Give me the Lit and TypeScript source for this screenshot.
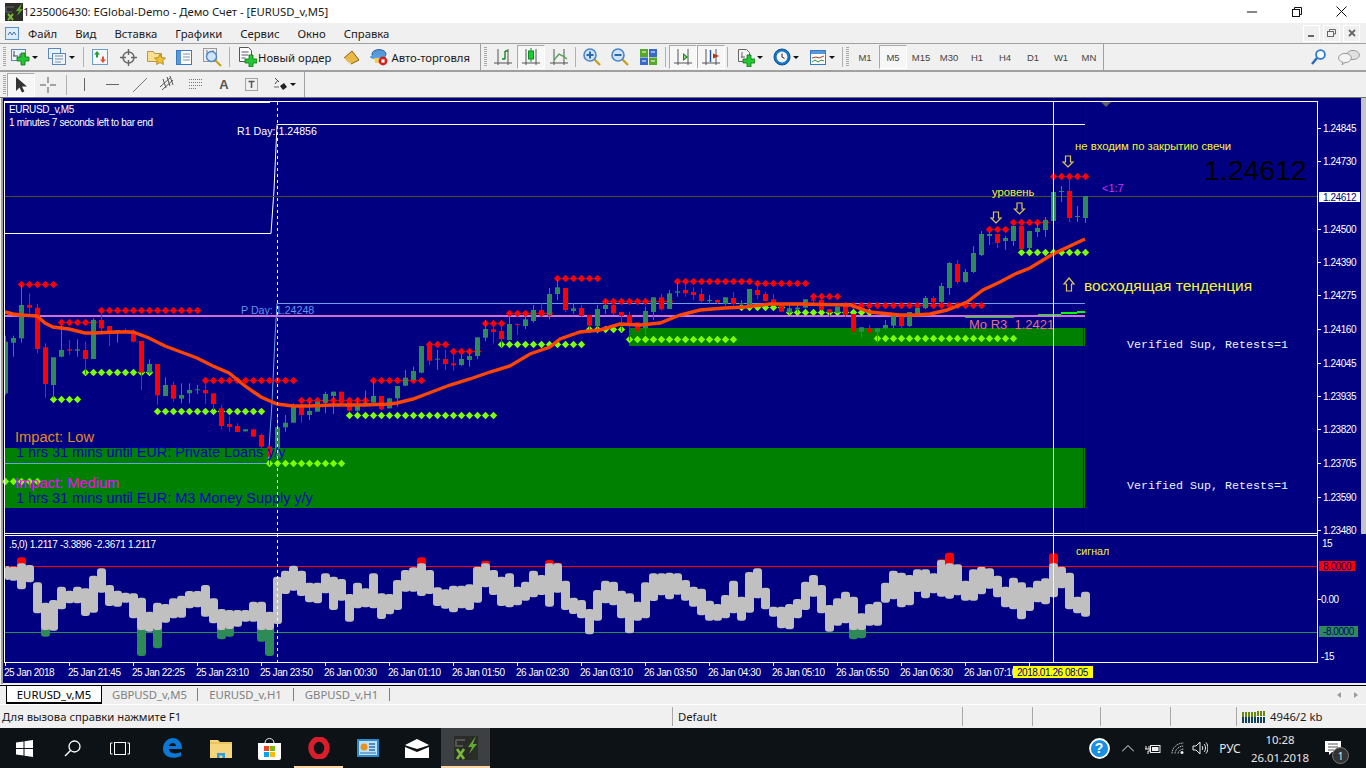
import { LitElement, html, svg, css } from 'lit'
import { customElement } from 'lit/decorators.js'

const CX = (k: number) => 5 + 8 * k

// rows are [green?, bodyTop, bodyBottom, wickTop, wickBottom], read off 3x crops
type Row = number[]
const fromCrop = (base: number, scale: number, rows: Row[]) =>
  rows.map((r) => [r[0], ...r.slice(1).map((v) => base + v / scale)])

const CANDLES = [
  ...fromCrop(270, 3, [
    [1,215,370,197,375],[1,204,218,197,260],[1,105,205,45,218],[0,105,113,70,130],[0,113,237,102,250],
    [0,232,342,220,383],[1,262,345,262,385],[1,240,260,165,262],[0,238,242,210,255],[1,238,242,208,260],
    [0,240,267,215,313],[1,150,267,145,267],[0,150,175,120,185],[0,168,188,168,228],[1,180,190,180,218],
    [0,180,188,175,190],[0,187,215,178,218],[0,213,308,213,360],[1,282,308,268,312],[0,282,376,282,405],
    [1,345,378,322,378],[0,345,386,335,395],[1,375,386,340,400],[1,360,370,340,400],[1,358,361,345,372],
    [0,360,370,335,402],[0,370,402,370,420],[0,415,468,405,478],[0,462,471,440,485],[0,468,486,460,486],
    [1,478,484,478,484],[0,478,500,478,500],[0,495,530,490,535],[0,530,560,530,585],[1,472,560,435,560],
    [1,458,472,435,485],[1,410,458,400,458],[0,410,435,385,458],[1,423,435,395,450],[1,395,425,395,425],
    [1,372,398,365,430],[1,365,378,365,432],[0,365,398,365,400],[0,385,422,380,425],[1,403,422,385,425],
    [1,398,405,362,405],[1,378,398,332,398],[0,378,418,378,420],[1,385,415,385,415],[1,348,385,348,410],
    [1,323,347,300,347],[1,303,330,290,335],[1,228,308,228,310],[0,228,272,215,285],[1,266,269,240,300],
    [0,267,282,240,300],
  ]),
  ...fromCrop(260, 3, [
    [0,310,316,285,332],[1,297,315,285,318],[1,288,300,270,320],[1,232,288,232,297],[1,207,233,180,243],
    [0,208,216,180,250],[0,213,237,180,262],[1,192,240,165,240],[0,192,195,190,225],[1,178,198,165,207],
    [1,150,183,135,188],[0,150,165,130,170],[1,102,165,84,178],[1,82,102,58,120],[0,84,150,84,157],
    [1,145,153,130,162],[0,144,168,135,170],[0,165,197,165,218],[1,147,198,135,215],[1,135,147,120,162],
    [0,135,160,125,165],[0,156,168,156,215],[0,165,190,155,242],[0,187,213,187,215],[1,153,205,140,225],
    [1,112,156,112,180],[0,112,148,102,152],[1,100,147,90,147],[1,94,98,68,110],[0,90,100,75,110],
    [0,96,105,82,120],[0,102,123,85,128],[1,120,122,105,132],[0,120,128,118,132],[1,112,132,112,136],
    [0,114,132,96,136],[1,129,132,120,145],[1,87,135,87,135],[0,90,105,68,118],[0,102,123,96,125],
    [0,118,132,102,138],[0,132,155,132,157],[1,145,158,130,165],[1,143,148,130,158],[1,118,143,118,145],
    [0,118,122,100,136],[0,120,150,120,152],[0,148,158,148,170],[1,140,158,140,160],[0,140,165,128,172],
    [0,162,215,162,217],[1,202,215,202,233],[0,205,218,195,218],[1,205,216,205,250],[1,195,205,180,208],
    [1,168,197,168,204],
  ]),
  ...fromCrop(0, 1, [
    [0,315,326,314,328],[1,312,326,312,327],[1,308,314,308,315],[1,298,308,296,309],[0,298,302,296,304],
    [1,286,302,283,303],[1,263,288,262,295],[0,264,282,260,284],[1,272,282,269,283],[1,253,272,246,273],
    [1,234,255,231,256],[1,234,236,232,245],[0,234,243,234,248],[1,238,241,236,250],[1,226,241,226,246],
    [0,226,249,220,250],[1,231,248,231,249],[1,228,232,223,237],[1,220,230,217,237],[1,192,221,177,221],
    [1,191,192,186,202],[0,191,218,177,222],[1,216,217,206,222],[1,196,218,196,223],
  ]),
]

// [first k, last k, y]
const RED_ROWS = [
  [2,6,284],[12,24,310],[7,11,322],[25,36,380],[37,45,400],[46,52,380],[53,55,344],[56,59,351],[60,62,323],
  [63,68,313],[69,74,278],[75,83,301],[84,93,281],[94,100,283],[101,104,296],[105,122,305],[123,125,229],
  [126,130,222],[131,135,176],
]
const GREEN_ROWS = [
  [0,4,481],[6,9,399],[10,18,372],[19,32,411],[33,42,463],[43,61,415],[62,72,344],[73,77,329],[78,91,339],
  [92,97,307],[98,108,312],[109,126,338],[127,135,252],
]

const MA = [
  [5,312],[13,314],[21,315],[37,316],[45,323],[53,327],[61,328],[69,329],[85,333],[93,333],[117,332],[133,332],
  [149,338],[165,346],[181,352],[197,358],[213,366],[229,373],[245,386],[261,397],[277,404],[293,406],[309,406],
  [333,405],[365,405],[389,404],[397,403],[413,399],[429,393],[450,385],[470,379],[490,372],[510,366],[530,354],
  [550,347],[560,339],[580,332],[600,330],[620,324],[640,325],[660,323],[680,315],[700,310],[725,308],[745,307],
  [770,304],[800,304],[850,305],[870,312],[900,315],[915,315],[930,314],[947,310],[967,302],[983,290],[1000,282],
  [1015,274],[1030,268],[1053,254],[1085,239],
]

// sub window bars, [top, bottom] in 3x crop rows from y=530
const OSC = [
  [108,150],[110,152],[100,178],[105,157],[157,250],[218,300],[210,302],[170,238],[182,220],[170,220],[175,258],[137,248],
  [115,188],[165,228],[182,230],[188,218],[190,265],[203,300],[245,305],[218,300],[222,278],[205,265],[197,263],[183,235],
  [183,232],[165,260],[205,280],[237,300],[240,297],[240,290],[240,275],[215,275],[215,300],[245,300],[140,282],[122,192],
  [107,182],[122,198],[158,217],[158,220],[130,190],[140,240],[147,212],[192,275],[158,235],[175,232],[130,235],[190,267],
  [192,253],[150,240],[120,185],[112,185],[100,198],[120,192],[172,228],[178,236],[167,247],[167,235],[163,240],[110,218],
  [100,172],[120,195],[140,228],[130,232],[170,226],[155,212],[122,202],[135,195],[100,230],[100,188],[152,240],[203,252],
  [210,265],[237,313],[180,272],[152,220],[155,226],[182,265],[190,310],[215,272],[157,265],[130,213],[130,196],[128,208],
  [130,194],[150,212],[170,230],[176,256],[212,272],[222,272],[195,265],[152,250],[200,272],[126,248],[115,205],[173,238],
  [230,260],[230,295],[222,298],[207,265],[155,240],[135,200],[165,250],[225,305],[205,287],[185,280],[200,300],[250,300],
  [222,287],[215,287],[158,218],[122,208],[128,232],[135,226],[118,186],[118,205],[130,190],[90,200],[100,206],[103,196],
  [152,212],[118,212],[110,193],[115,176],[137,202],[170,232],[143,238],[157,268],[172,243],[152,217],[145,223],[100,202],
  [110,175],[128,238],[200,250],[185,260],
]
const OSC_RED: Record<number, number> = { 2: 82, 52: 82, 60: 92, 68: 90, 69: 98, 117: 88, 118: 68, 131: 70 }
const OSC_GREEN: Record<number, number> = { 5: 320, 17: 378, 19: 355, 27: 328, 28: 320, 32: 335, 33: 378, 106: 328, 107: 325 }

const PRICES = [
  ['1.24845',128],['1.24730',161],['1.24500',229],['1.24390',262],['1.24275',295],['1.24160',329],['1.24045',363],
  ['1.23935',396],['1.23820',429],['1.23705',463],['1.23590',497],['1.23480',530],
] as [string, number][]

const TIMES = [
  '25 Jan 2018','25 Jan 21:45','25 Jan 22:25','25 Jan 23:10','25 Jan 23:50','26 Jan 00:30','26 Jan 01:10','26 Jan 01:50',
  '26 Jan 02:30','26 Jan 03:10','26 Jan 03:50','26 Jan 04:30','26 Jan 05:10','26 Jan 05:50','26 Jan 06:30','26 Jan 07:10',
]

const diamond = (x: number, y: number, fill: string) =>
  svg`<polygon points="${x - 3.7},${y} ${x},${y - 3.7} ${x + 3.7},${y} ${x},${y + 3.7}" fill=${fill} />`

const hollowArrow = (cx: number, top: number, up = false) => {
  const h = up ? 13 : 11
  const p = up
    ? `${cx},${top} ${cx + 5},${top + 6} ${cx + 2.5},${top + 6} ${cx + 2.5},${top + h} ${cx - 2.5},${top + h} ${cx - 2.5},${top + 6} ${cx - 5},${top + 6}`
    : `${cx - 2.5},${top} ${cx + 2.5},${top} ${cx + 2.5},${top + 6} ${cx + 5},${top + 6} ${cx},${top + h} ${cx - 5},${top + 6} ${cx - 2.5},${top + 6}`
  return svg`<polygon points=${p} fill="none" stroke="#e0c850" stroke-width="1.2" />`
}

@customElement('mt-chart')
export class MtChart extends LitElement {
  static override styles = css`
    :host { display: block; width: 1366px; height: 586px; flex: none; }
    svg { display: block; }
    text { font-family: "Liberation Sans", Arial, sans-serif; }
    .ax { font-size: 10px; letter-spacing: -0.44px; fill: #fff; }
    .ax.dark { fill: #000080; }
    .lbl { font-size: 10px; letter-spacing: -0.34px; fill: #fff; }
    .level { font-size: 10.67px; fill: #fff; }
    .level.blue { fill: #6495ed; }
    .mo { font-size: 13px; fill: #e0708c; }
    .ylw { font-size: 11.3px; fill: #f4f430; }
    .ylw.small { font-size: 10.67px; }
    .ylw.big { font-size: 15.5px; }
    .ratio { font-size: 11px; fill: #c832ff; }
    .bid { font-size: 28.4px; fill: #000; }
    .news { font-size: 14.4px; fill: #0000c8; }
    .news.low { font-size: 14.67px; fill: #e08a28; }
    .news.mid { font-size: 14.67px; fill: #ff00ff; }
    .zone { font-family: "Liberation Mono", monospace; font-size: 11.67px; fill: #f0f4ff; }
    .ma { shape-rendering: geometricPrecision; }
  `

  private candles() {
    return CANDLES.map((c, k) => {
      const x = CX(k)
      const fill = c[0] ? '#2e8b57' : '#ff0000'
      const left = Math.max(5, x - 2)
      return svg`<rect x=${x} y=${c[3]} width="1" height=${c[4] - c[3]} fill=${fill} />
        <rect x=${left} y=${c[1]} width=${x + 3 - left} height=${Math.max(1, c[2] - c[1])} fill=${fill} />`
    })
  }

  private diamonds() {
    const rows = (list: number[][], fill: string) =>
      list.flatMap(([a, b, y]) => {
        const out = []
        for (let k = a; k <= b; k++) out.push(diamond(CX(k) + 0.5, y + 0.5, fill))
        return out
      })
    return [rows(GREEN_ROWS, '#7cff00'), rows(RED_ROWS, '#ff0000')]
  }

  private oscillator() {
    const y = (v: number) => 530 + v / 3
    // bars are one pixel wider than the spacing so neighbours merge
    const bar = (k: number, a: number, b: number, fill: string) => {
      const left = Math.max(5, CX(k) - 4)
      return svg`<rect x=${left} y=${y(a)} width=${CX(k) + 5 - left} height=${(b - a) / 3} rx="3" fill=${fill} />`
    }
    return OSC.map(([t, b], k) => svg`
      ${OSC_RED[k] ? bar(k, OSC_RED[k], t + 12, '#ff0000') : ''}
      ${OSC_GREEN[k] ? bar(k, b - 12, OSC_GREEN[k], '#2e8b57') : ''}
      ${bar(k, t, b, '#c0c0c0')}`)
  }

  override render() {
    const ma = MA.map((p) => p.join(',')).join(' ')
    return html`<svg width="1366" height="586" viewBox="0 98 1366 586">
      <rect x="0" y="98" width="1366" height="586" fill="#f0f0f0" />
      <rect x="1" y="98" width="2" height="586" fill="#a0a0a0" />
      <rect x="3" y="98" width="1363" height="585" fill="#000080" />
      <rect x="1361" y="98" width="5" height="436" fill="#c4c4c4" />

      <rect x="5" y="448" width="1080" height="60" fill="#008000" />
      <rect x="629" y="328" width="456" height="18" fill="#008000" />
      <rect x="1083" y="102" width="1" height="431" fill="#000" />

      <polyline points="4,233.5 271,233.5 274,190 277,125 277,124.5 1085,124.5" fill="none" stroke="#fff" />
      <polyline points="5,463.5 268,463.5 272,403 275,337 277,303.5 1085,303.5" fill="none" stroke="#6f9fe8" />
      <rect x="4" y="196" width="1313" height="1" fill="#4d4d28" />
      <rect x="5" y="315" width="1080" height="2" fill="#d070d0" />
      <rect x="965" y="317" width="49" height="1" fill="#00e000" />
      <rect x="1038" y="314" width="23" height="1" fill="#00ff00" />
      <rect x="1061" y="312" width="16" height="2" fill="#00ff00" />
      <rect x="1077" y="311" width="8" height="2" fill="#00ff00" />

      ${this.diamonds()}
      ${this.candles()}
      <polyline class="ma" points=${ma} fill="none" stroke="#ff4500" stroke-width="3.4" />

      <text class="level" x="237" y="135">R1 Day: 1.24856</text>
      <text class="level blue" x="241" y="314">P Day: 1.24248</text>
      <text class="mo" x="969" y="329">Mo R3&nbsp;&nbsp;1.2421</text>
      <text class="news low" x="15" y="442">Impact: Low</text>
      <text class="news" x="16" y="457">1 hrs 31 mins until EUR: Private Loans y/y</text>
      <text class="news mid" x="15" y="488">Impact: Medium</text>
      <text class="news" x="16" y="503">1 hrs 31 mins until EUR: M3 Money Supply y/y</text>
      <text class="lbl" x="9" y="113">EURUSD_v,M5</text>
      <text class="lbl" x="9" y="126">1 minutes 7 seconds left to bar end</text>
      <text class="ylw" x="1075" y="150">не входим по закрытию свечи</text>
      <text class="ylw" x="992" y="196">уровень</text>
      <text class="ratio" x="1102" y="192">&lt;1:7</text>
      <text class="bid" x="1204" y="180">1.24612</text>
      <text class="ylw big" x="1084" y="291">восходящая тенденция</text>
      <text class="zone" x="1127" y="348">Verified Sup, Retests=1</text>
      <text class="zone" x="1127" y="489">Verified Sup, Retests=1</text>
      ${hollowArrow(1068, 156)} ${hollowArrow(1019.5, 203)} ${hollowArrow(996, 212)} ${hollowArrow(1069, 278, true)}
      <polygon points="1101,102 1111,102 1106,107" fill="#606060" />

      <rect x="4" y="101" width="1314" height="1" fill="#fff" />
      <rect x="4" y="102" width="266" height="1" fill="#fff" />
      <rect x="4" y="101" width="1" height="562" fill="#fff" />
      <rect x="1317" y="101" width="1" height="562" fill="#fff" />
      <rect x="4" y="533" width="1314" height="1" fill="#fff" />
      <rect x="4" y="535" width="1314" height="1" fill="#fff" />
      <rect x="4" y="662" width="1314" height="1" fill="#fff" />

      <rect x="5" y="566" width="1312" height="1" fill="#ff0000" />
      <rect x="5" y="632" width="1312" height="1" fill="#2e8b57" />
      ${this.oscillator()}

      <line x1="277.5" y1="102" x2="277.5" y2="662" stroke="#fff" stroke-dasharray="3 3" />
      <rect x="1053" y="102" width="1" height="560" fill="#ffff99" />

      ${PRICES.map(([t, y]) => svg`<rect x="1318" y=${y} width="3" height="1" fill="#fff" /><text class="ax" x="1323" y=${y + 4}>${t}</text>`)}
      <rect x="1319" y="192" width="41" height="10" fill="#fff" />
      <text class="ax dark" x="1323" y="201">1.24612</text>

      <text class="lbl" x="9" y="548">.5,0) 1.2117 -3.3896 -2.3671 1.2117</text>
      <text class="ylw small" x="1076" y="555">сигнал</text>
      <text class="ax" x="1322" y="547">15</text>
      <text class="ax" x="1321" y="603">0.00</text>
      <text class="ax" x="1321" y="660">-15</text>
      <rect x="1318" y="599" width="3" height="1" fill="#fff" />
      <rect x="1319" y="561" width="36" height="10" fill="#ff0000" />
      <text class="ax dark" x="1323" y="570">8.0000</text>
      <rect x="1319" y="626" width="39" height="11" fill="#2e8b57" />
      <text class="ax dark" x="1323" y="635">-8.0000</text>

      ${TIMES.map((t, i) => svg`<rect x=${5 + 64 * i} y="663" width="1" height="3" fill="#fff" /><text class="ax" x=${4 + 64 * i} y="676">${t}</text>`)}
      <rect x="1029" y="663" width="1" height="3" fill="#fff" />
      <rect x="1013" y="666" width="80" height="12" fill="#ffff00" />
      <text class="ax dark" x="1017" y="676">2018.01.26 08:05</text>
    </svg>`
  }
}

/* toolbar icons */
const ic = (w: number, h: number, body: unknown) =>
  html`<svg width=${w} height=${h} viewBox="0 0 ${w} ${h}">${body}</svg>`

const plus = (x: number, y: number, s = 5) => svg`
  <path d="M${x - s / 2} ${y - s * 1.5}h${s}v${s}h${s}v${s}h${-s}v${s}h${-s}v${-s}h${-s}v${-s}h${s}z"
    fill="#22c832" stroke="#107018" stroke-width=".8" />`

const axes = (inner: unknown) => ic(20, 20, svg`
  <path d="M5 2v16M15 2v16M1 16h18" stroke="#555" stroke-width="1" fill="none" />${inner}`)

const mag = (sign: string) => ic(18, 18, svg`
  <path d="M11 11l6 6" stroke="#c8a020" stroke-width="2.4" />
  <circle cx="7" cy="7" r="6" fill="#cfe4f8" stroke="#4a86c8" stroke-width="1.6" />
  ${sign === '+' ? svg`<path d="M7 3.5v7M3.5 7h7" stroke="#2a68b0" stroke-width="2" />` : svg`<path d="M3.5 7h7" stroke="#2a68b0" stroke-width="2" />`}`)

const ICONS = {
  newChart: ic(19, 19, svg`<rect x=".5" y="1.5" width="14" height="11" fill="#eaf2fb" stroke="#5b86b8" />
    <path d="M3 3v5M2 8h5M9 6v5M8 11h4" stroke="#445" />${plus(12, 11, 4)}`),
  profiles: ic(19, 18, svg`<rect x=".5" y=".5" width="12" height="10" fill="#eaf2fb" stroke="#5b86b8" />
    <rect x="4.5" y="5.5" width="13" height="11" fill="#eef4fb" stroke="#5b86b8" /><path d="M7 8h8M7 11h8M7 14h6" stroke="#7a8ea8" />`),
  market: ic(17, 17, svg`<rect x=".5" y=".5" width="15" height="15" fill="#f4f8fd" stroke="#6a9ccc" />
    <path d="M5 2l3 3.5h-2v3h-2v-3h-2z" fill="#20a030" /><path d="M11 14l3-3.5h-2v-3h-2v3h-2z" fill="#e05030" />`),
  target: ic(17, 17, svg`<circle cx="8.5" cy="8.5" r="5.5" fill="none" stroke="#666" stroke-width="1.4" />
    <path d="M8.5 0v6M8.5 11v6M0 8.5h6M11 8.5h6" stroke="#666" stroke-width="1.4" />`),
  folder: ic(19, 18, svg`<path d="M.5 3.5h6l1 2h7v8h-14z" fill="#f8e090" stroke="#b89840" />
    <path d="M13 6l1.7 3.6 3.8.5-2.8 2.6.8 3.8-3.5-2-3.5 2 .8-3.8-2.8-2.6 3.8-.5z" fill="#f0c030" stroke="#a88018" stroke-width=".8" />`),
  nav: ic(16, 15, svg`<rect x=".5" y=".5" width="15" height="14" fill="#fff" stroke="#3878c8" />
    <rect x="1" y="1" width="4" height="13" fill="#5898d8" /><path d="M7 4h7M7 7h7M7 10h7" stroke="#7890b0" />`),
  tester: ic(19, 19, svg`<rect x=".5" y=".5" width="13" height="13" fill="#eee" stroke="#999" />
    <path d="M4 2v4M10 2v4" stroke="#778" /><path d="M12 12l6 6" stroke="#c8a020" stroke-width="2.2" />
    <circle cx="8.5" cy="8.5" r="5" fill="#cfe4f8" stroke="#4a86c8" stroke-width="1.4" />`),
  order: ic(18, 20, svg`<path d="M.5.5h9l3 3v11h-12z" fill="#fff" stroke="#555" /><path d="M2.5 5h7M2.5 8h7M2.5 11h4" stroke="#556" />${plus(12, 14, 4)}`),
  book: ic(17, 15, svg`<path d="M1 8l8-7 7 9-8 4z" fill="#e8b848" stroke="#8a6010" /><path d="M1 8l7 6" stroke="#fff0b0" />`),
  auto: ic(19, 18, svg`<ellipse cx="9" cy="6" rx="7" ry="4.4" fill="#5898d8" stroke="#2860a0" /><ellipse cx="8" cy="9" rx="8" ry="2.4" fill="#58a0e0" />
    <path d="M4 10h10l-1 5h-8z" fill="#f0d060" /><circle cx="13" cy="13" r="4.4" fill="#d02020" /><rect x="11.4" y="11.4" width="3.2" height="3.2" fill="#fff" />`),
  bars: axes(svg`<path d="M12 4v8M12 4h3M12 12H9" stroke="#108a20" stroke-width="1.4" fill="none" />`),
  candles: axes(svg`<path d="M10 1v14" stroke="#108a20" /><rect x="7.5" y="4" width="5" height="8" fill="#14d030" stroke="#108a20" />`),
  lines: axes(svg`<path d="M5 13l5-6 4 2 4 3" stroke="#50a050" stroke-width="1.4" fill="none" />`),
  tile: ic(17, 16, svg`<rect width="8" height="8" fill="#58a828" /><rect x="9" width="8" height="8" fill="#3868c8" />
    <rect y="8.5" width="8" height="8" fill="#3868c8" /><rect x="9" y="8.5" width="8" height="8" fill="#58a828" />
    <path d="M2 3h4M11 3h4M2 12h4M11 12h4" stroke="#fff" />`),
  scroll: axes(svg`<path d="M10 6l5 4-5 4z" fill="#108a20" /><path d="M11 8l2 2-2 2z" fill="#8fe08f" />`),
  shift: axes(svg`<path d="M9.5 3v12" stroke="#2050a0" stroke-width="1.4" /><path d="M18 9l-6-2.4v4.8z" fill="#c03010" />`),
  indicators: ic(17, 19, svg`<path d="M.5 1.5h8l3 3v9h-11z" fill="#f4f4f4" stroke="#666" /><path d="M4 4v6M3 9h4" stroke="#666" />${plus(11, 13, 4)}`),
  clock: ic(18, 18, svg`<circle cx="9" cy="9" r="8" fill="#1878c8" stroke="#0a5090" /><circle cx="9" cy="9" r="5.4" fill="#f6f6f6" />
    <path d="M9 5.5V9l2.5 1.5" stroke="#223" fill="none" />`),
  tpl: ic(17, 15, svg`<rect x=".5" y=".5" width="15" height="14" fill="#fff" stroke="#3878c8" /><rect x="1" y="1" width="14" height="3" fill="#5898d8" />
    <path d="M2 8l4-1 3 1 5-2" stroke="#b04020" fill="none" /><path d="M2 12l3-2 3 2 3-2 3 1" stroke="#309030" fill="none" />`),
  arrow: ic(16, 18, svg`<path d="M3 1v14l3.5-3.5 2.5 5 2.4-1-2.4-5h5z" fill="#333" />`),
  cross: ic(16, 16, svg`<path d="M8 0v6M8 10v6M0 8h6M10 8h6" stroke="#555" />`),
  vline: ic(3, 13, svg`<path d="M1.5 0v13" stroke="#666" />`),
  hline: ic(13, 3, svg`<path d="M0 1.5h13" stroke="#666" />`),
  trend: ic(14, 14, svg`<path d="M0 14L14 0" stroke="#777" />`),
  channel: ic(16, 17, svg`<path d="M0 11L11 1M2 14L13 4M3 3l3 9M7 1l3 9M10 0l3 9" stroke="#555" />`),
  fibo: ic(15, 13, svg`<path d="M0 1.5h13M0 4.5h13M0 7.5h13M0 10.5h7" stroke="#777" stroke-dasharray="1 1" />`),
  tbox: ic(14, 14, svg`<rect x=".5" y=".5" width="12" height="12" fill="none" stroke="#555" stroke-dasharray="1 1" /><path d="M3.5 3.5h6M6.5 3.5v6.5" stroke="#555" stroke-width="1.5" />`),
  marks: ic(15, 15, svg`<path d="M2 1l4 4M5 3l-3 4" stroke="#444" /><path d="M7 9l4-3 3 4-4 3z" fill="#222" /><path d="M1 10h5" stroke="#666" />`),
  search: ic(15, 16, svg`<circle cx="9.5" cy="5.5" r="4.4" fill="#fff" stroke="#2a78d0" stroke-width="1.8" /><path d="M6 9l-5 6" stroke="#2a68b8" stroke-width="2.4" />`),
  chat: ic(22, 16, svg`<ellipse cx="15" cy="6" rx="6.4" ry="4.6" fill="#e0e0e0" stroke="#999" /><ellipse cx="7" cy="9" rx="6.4" ry="4.6" fill="#f4f4f4" stroke="#999" /><path d="M5 13l-1 3 3-2.4" fill="#f4f4f4" stroke="#999" />`),
}

const LOGO = ic(18, 18, svg`<rect width="18" height="18" fill="#2c2e28" /><path d="M17 0l-6 8h3l-2 5 6-7h-3l2-6z" fill="#62a830" />
  <path d="M1 4h8M1 4v5h6" stroke="#555" stroke-width="1.6" fill="none" /><path d="M3 11l5 6M8 11l-5 6" stroke="#7ab83c" stroke-width="2" />`)

@customElement('app-root')
export class AppRoot extends LitElement {
  static override styles = css`
    :host { display: flex; flex-direction: column; width: 1366px; height: 768px; overflow: hidden; background: #f0f0f0;
      font-family: "Noto Sans", "Liberation Sans", sans-serif; font-size: 11.3px; color: #1a1a1a; }
    :host > * { flex: none; }
    svg { display: block; flex: none; }

    .title { height: 23px; background: #fff; display: flex; align-items: center; padding: 0 2px 0 5px; box-sizing: border-box; }
    .title-text { flex: 1; }
    .win { width: 45px; height: 23px; display: flex; align-items: center; justify-content: center; }

    .menu { height: 20px; display: flex; align-items: center; padding-left: 5px; }
    .menu-item { margin-left: 18px; }
    .menu-icon { width: 15px; height: 15px; margin-right: -10px; }
    .mdi { margin-left: auto; display: flex; gap: 3px; padding-right: 6px; }
    .mdi-btn { width: 15px; height: 15px; border: 1px solid #fff; display: flex; align-items: center; justify-content: center; }

    .bar { display: flex; align-items: stretch; border-top: 1px solid #a0a0a0; box-sizing: border-box; }
    .bar1 { height: 28px; }
    .bar2 { height: 27px; border-bottom: 1px solid #707070; }
    .group { display: flex; align-items: center; border-right: 1px solid #a0a0a0; border-bottom: 1px solid #a0a0a0; padding-left: 3px; box-sizing: border-box; flex: none; }
    .bar2 .group { border-bottom: 0; }
    .g1 { width: 481px; }
    .g2 { width: 623px; }
    .g3 { width: 305px; }
    .rest { flex: 1; display: flex; align-items: center; justify-content: flex-end; gap: 12px; padding-right: 6px; border-bottom: 1px solid #a0a0a0; }
    .bar2 .rest { border-bottom: 0; }
    .grip { width: 3px; height: 20px; margin-right: 3px; flex: none; background: repeating-linear-gradient(#a8a8a8 0 1px, #f0f0f0 1px 2px); }
    .btn { display: flex; align-items: center; justify-content: center; height: 24px; width: 28px; flex: none; box-sizing: border-box; color: #333; }
    .btn.on { background: #f7f7f7; border: 1px solid #fff; border-top-color: #a8a8a8; border-left-color: #a8a8a8; }
    .drop { display: flex; align-items: center; width: 37px; height: 24px; padding-left: 2px; flex: none; box-sizing: border-box; }
    .drop.w35 { width: 35px; }
    .drop.w34 { width: 34px; }
    .caret { width: 0; height: 0; border: 3px solid transparent; border-top: 3px solid #111; border-bottom: 0; margin-left: 2px; }
    .sep { width: 1px; height: 20px; background: #b0b0b0; flex: none; }
    .text-btn { display: flex; align-items: center; gap: 1px; height: 24px; flex: none; padding-left: 2px; }
    .auto-btn { gap: 2px; padding-left: 0; }
    .tf { font-family: "Liberation Sans", sans-serif; font-size: 9.5px; color: #444; }
    .glyph-a { font-family: "Liberation Sans", sans-serif; font-weight: 700; font-size: 13px; color: #555; }
    .ml-n2 { margin-left: -2px; }
    .ml-n1 { margin-left: -1px; }
    .ml2 { margin-left: 2px; }
    .ml3 { margin-left: 3px; }
    .ml4 { margin-left: 4px; }
    .ml5 { margin-left: 5px; }
    .ml6 { margin-left: 6px; }
    .ml7 { margin-left: 7px; }
    .ml8 { margin-left: 8px; }

    .tabs { height: 19px; box-sizing: border-box; display: flex; margin-top: 1px; border-top: 1px solid #000; padding-left: 6px; align-items: stretch; }
    .tab { display: flex; align-items: center; justify-content: center; color: #808080; border-right: 1px solid #808080; margin: 2px 0 3px; width: 96px; box-sizing: border-box; flex: none; }
    .tab.active { margin: -1px 0 0; color: #000; background: #fff; border: 1px solid #000; border-bottom-width: 2px; }
    .arrows { margin-left: auto; display: flex; gap: 13px; align-items: center; padding-right: 8px; }
    .arrow-l { border: 3px solid transparent; border-right: 4px solid #9a9a9a; border-left: 0; }
    .arrow-r { border: 3px solid transparent; border-left: 4px solid #9a9a9a; border-right: 0; }

    .status { height: 24px; display: flex; border-top: 1px solid #fff; align-items: center; box-sizing: border-box; padding-left: 2px; }
    .status-help { width: 670px; flex: none; }
    .cell { height: 19px; display: flex; align-items: center; border-left: 1px solid #a8a8a8; padding-left: 5px; box-sizing: border-box; flex: none; }
    .c290 { width: 290px; }
    .c70 { width: 70px; }
    .c68 { width: 68px; }
    .c66 { width: 66px; }
    .meter { gap: 4px; }

    .task { height: 40px; background: #0d1216; display: flex; align-items: stretch; color: #e6e6e6; }
    .t { width: 48px; display: flex; align-items: center; justify-content: center; flex: none; box-sizing: border-box; }
    .t.app { width: 49px; }
    .t.first { margin-left: 3px; }
    .t.open { border-bottom: 2px solid #fbd6a4; padding-top: 2px; }
    .t.active { background: #3c4042; }
    .tray { margin-left: auto; display: flex; align-items: center; }
    .tr { display: flex; justify-content: center; align-items: center; flex: none; }
    .help { width: 38px; position: relative; }
    .help-mark { position: absolute; font: 700 14px "Liberation Sans", sans-serif; color: #fff; }
    .w20 { width: 20px; }
    .w22 { width: 22px; }
    .w24 { width: 24px; }
    .w28 { width: 28px; }
    .lang { width: 36px; font-size: 12px; }
    .clock { width: 64px; flex-direction: column; gap: 3px; margin-right: 4px; font-size: 11.4px; }
    .notify { width: 50px; height: 40px; position: relative; justify-content: flex-start; padding-left: 9px; box-sizing: border-box; }
    .badge { position: absolute; left: 16px; top: 19px; width: 15px; height: 15px; border-radius: 50%; background: #333; border: 1px solid #777;
      color: #eee; font-size: 10px; display: flex; align-items: center; justify-content: center; }
  `

  private toolbar() {
    const on = 'btn on'
    return html`<div class="bar bar1">
      <div class="group g1">
        <div class="grip"></div>
        <div class="drop">${ICONS.newChart}<i class="caret"></i></div>
        <div class="drop">${ICONS.profiles}<i class="caret"></i></div>
        <div class="sep"></div>
        <div class="btn ml2">${ICONS.market}</div>
        <div class="btn">${ICONS.target}</div>
        <div class="btn">${ICONS.folder}</div>
        <div class="btn">${ICONS.nav}</div>
        <div class="btn">${ICONS.tester}</div>
        <div class="sep ml3"></div>
        <div class="text-btn ml7">${ICONS.order}<span>Новый ордер</span></div>
        <div class="btn ml6">${ICONS.book}</div>
        <div class="text-btn auto-btn ml5">${ICONS.auto}<span>Авто-торговля</span></div>
      </div>
      <div class="group g2">
        <div class="grip"></div>
        <div class="btn ml-n1">${ICONS.bars}</div>
        <div class=${on}>${ICONS.candles}</div>
        <div class="btn">${ICONS.lines}</div>
        <div class="sep ml2"></div>
        <div class="btn ml2">${mag('+')}</div>
        <div class="btn">${mag('-')}</div>
        <div class="btn">${ICONS.tile}</div>
        <div class="sep ml3"></div>
        <div class="${on} ml3">${ICONS.scroll}</div>
        <div class=${on}>${ICONS.shift}</div>
        <div class="sep ml2"></div>
        <div class="drop w35 ml8">${ICONS.indicators}<i class="caret"></i></div>
        <div class="drop">${ICONS.clock}<i class="caret"></i></div>
        <div class="drop w34">${ICONS.tpl}<i class="caret"></i></div>
        <div class="sep"></div>
        <div class="grip ml3"></div>
        <div class="tf btn ml-n1">M1</div>
        <div class="tf ${on}">M5</div>
        ${['M15', 'M30', 'H1', 'H4', 'D1', 'W1', 'MN'].map((t) => html`<div class="tf btn">${t}</div>`)}
      </div>
      <div class="rest">${ICONS.search}${ICONS.chat}</div>
    </div>
    <div class="bar bar2">
      <div class="group g3">
        <div class="grip"></div>
        <div class="${on} ml-n2">${ICONS.arrow}</div>
        <div class="btn ml-n1">${ICONS.cross}</div>
        <div class="sep ml4"></div>
        <div class="btn ml3">${ICONS.vline}</div>
        <div class="btn">${ICONS.hline}</div>
        <div class="btn">${ICONS.trend}</div>
        <div class="btn">${ICONS.channel}</div>
        <div class="btn">${ICONS.fibo}</div>
        <div class="btn glyph-a">A</div>
        <div class="btn">${ICONS.tbox}</div>
        <div class="drop w34 ml5">${ICONS.marks}<i class="caret"></i></div>
      </div>
      <div class="rest"></div>
    </div>`
  }

  private taskbar() {
    return html`<div class="task">
      <div class="t">${ic(17, 17, svg`<path d="M0 2.5L7.5 1.4v6.6H0zM8.5 1.3L17 0v8H8.5zM0 9h7.5v6.6L0 14.5zM8.5 9H17v8l-8.5-1.3z" fill="#fff" />`)}</div>
      <div class="t">${ic(17, 17, svg`<circle cx="10.5" cy="6.5" r="5.5" fill="none" stroke="#fff" stroke-width="1.3" /><path d="M6.5 10.5L1 16" stroke="#fff" stroke-width="1.5" />`)}</div>
      <div class="t">${ic(20, 13, svg`<rect x="4.5" y=".5" width="11" height="12" fill="none" stroke="#fff" /><path d="M2.5 1H.5v11h2M17.5 1h2v11h-2" fill="none" stroke="#fff" />`)}</div>
      <div class="t app first">${ic(20, 20, svg`<path d="M1 11C1 4 6 0 11 0c5 0 9 4 9 11H7c0 4 6 6 12 3v4c-8 4-18 1-18-7zM7 8h7c0-4-6-4-7 0z" fill="#0a78d4" />`)}</div>
      <div class="t app">${ic(22, 19, svg`<path d="M0 1h8l2 2h12v16H0z" fill="#f5d67e" /><path d="M0 4h22" stroke="#e0b040" /><path d="M7 19v-5h8v5h-2.6v-2.4H9.6V19z" fill="#2f9be0" />`)}</div>
      <div class="t app">${ic(23, 23, svg`<path d="M7 6c0-6 9-6 9 0" fill="none" stroke="#eee" /><path d="M0 6h23v15a2 2 0 0 1-2 2H2a2 2 0 0 1-2-2z" fill="#fff" />
        <rect x="6" y="9" width="5" height="5" fill="#e8452a" /><rect x="12" y="9" width="5" height="5" fill="#7fb800" /><rect x="6" y="15" width="5" height="5" fill="#08a4ef" /><rect x="12" y="15" width="5" height="5" fill="#ffb900" />`)}</div>
      <div class="t app open">${ic(22, 22, svg`<ellipse cx="11" cy="11" rx="8" ry="9" fill="none" stroke="#d81e2c" stroke-width="5.5" />`)}</div>
      <div class="t app">${ic(22, 18, svg`<rect width="22" height="18" fill="#2a8ad0" /><rect x="2" y="2" width="18" height="14" fill="#bfe0f4" /><circle cx="7" cy="8" r="3.5" fill="#e89020" /><path d="M12 5h6M12 8h6M12 11h6" stroke="#2a70b0" stroke-width="1.4" /><path d="M3 14h16" stroke="#2a70b0" />`)}</div>
      <div class="t app">${ic(24, 19, svg`<path d="M0 6L12 0l12 6-12 5z" fill="#fff" /><path d="M0 8v11h24V8l-12 5z" fill="#fff" /><path d="M2 7l10 5 10-5-10 3z" fill="#111" />`)}</div>
      <div class="t app open active">${ic(24, 24, svg`<rect width="24" height="24" fill="#2a2c28" /><path d="M22 0l-8 11h4l-3 7 8-10h-4l3-8z" fill="#62a830" /><path d="M3 13l7 10M10 13L3 23" stroke="#7ab83c" stroke-width="2.6" /><path d="M2 4h9M2 4v6h7" fill="none" stroke="#555" stroke-width="2" />`)}</div>
      <div class="tray">
        <div class="tr help">${ic(21, 21, svg`<circle cx="10.5" cy="10.5" r="9.5" fill="#1a90e0" stroke="#fff" stroke-width="1.8" />`)}<span class="help-mark">?</span></div>
        <div class="tr w20">${ic(12, 7, svg`<path d="M0 6.5l6-6 6 6" fill="none" stroke="#eee" />`)}</div>
        <div class="tr w28">${ic(17, 11, svg`<path d="M2 3v3M5 3v3M1 6h5v2H4v3" fill="none" stroke="#eee" /><rect x="6.5" y="2.5" width="9.5" height="7" fill="none" stroke="#eee" /><rect x="8" y="4" width="6.5" height="4" fill="#eee" />`)}</div>
        <div class="tr w22">${ic(13, 12, svg`<path d="M1 11.5C1 6 6 1 12.5 1M4 11.5C4 8 8 4 12.5 4M7 11.5c0-2 2-4 5.5-4.5" fill="none" stroke="#bbb" stroke-dasharray="1.5 .6" /><circle cx="11" cy="10.5" r="1.5" fill="#eee" />`)}</div>
        <div class="tr w24">${ic(16, 14, svg`<path d="M1 5h3l4-4v12l-4-4H1z" fill="none" stroke="#eee" /><path d="M10 5c1 1 1 3 0 4M12 3c2 2 2 6 0 8M14 1.5c2.5 3 2.5 8 0 11" fill="none" stroke="#eee" />`)}</div>
        <div class="tr lang">РУС</div>
        <div class="tr clock"><span>10:28</span><span>26.01.2018</span></div>
        <div class="tr notify">${ic(16, 15, svg`<path d="M0 0h16v11H7l-3 3v-3H0z" fill="#fff" /><path d="M3 3h10M3 6h10M3 9h6" stroke="#555" />`)}<span class="badge">1</span></div>
      </div>
    </div>`
  }

  override render() {
    return html`
      <div class="title">
        <span>${LOGO}</span>
        <span class="title-text">1235006430: EGlobal-Demo - Демо Счет - [EURUSD_v,M5]</span>
        <div class="win">${ic(10, 10, svg`<path d="M0 5h10" stroke="#111" />`)}</div>
        <div class="win">${ic(10, 10, svg`<rect x=".5" y="2.5" width="7" height="7" fill="none" stroke="#111" /><path d="M2.5 2.5v-2h7v7h-2" fill="none" stroke="#111" />`)}</div>
        <div class="win">${ic(11, 11, svg`<path d="M.5 .5l10 10M10.5 .5l-10 10" stroke="#111" />`)}</div>
      </div>
      <div class="menu">
        <span class="menu-icon">${ic(15, 15, svg`<rect x=".5" y="1.5" width="13" height="12" fill="#dcecf8" stroke="#5b90c8" /><path d="M3 9l2-3 2 3 2-3 2 3" stroke="#4070b0" fill="none" />`)}</span>
        ${['Файл', 'Вид', 'Вставка', 'Графики', 'Сервис', 'Окно', 'Справка'].map((m) => html`<span class="menu-item">${m}</span>`)}
        <div class="mdi">
          <div class="mdi-btn">${ic(7, 7, svg`<path d="M0 6h6" stroke="#666" stroke-width="2" />`)}</div>
          <div class="mdi-btn">${ic(9, 8, svg`<rect x=".5" y="2.5" width="6" height="5" fill="none" stroke="#666" /><path d="M2.5 2V.5h6v4.5H7" fill="none" stroke="#666" />`)}</div>
          <div class="mdi-btn">${ic(8, 8, svg`<path d="M1 1l6 6M7 1L1 7" stroke="#666" stroke-width="1.8" />`)}</div>
        </div>
      </div>
      ${this.toolbar()}
      <mt-chart></mt-chart>
      <div class="tabs">
        <div class="tab active">EURUSD_v,M5</div>
        <div class="tab">GBPUSD_v,M5</div>
        <div class="tab">EURUSD_v,H1</div>
        <div class="tab">GBPUSD_v,H1</div>
        <div class="arrows"><i class="arrow-l"></i><i class="arrow-r"></i></div>
      </div>
      <div class="status">
        <div class="status-help">Для вызова справки нажмите F1</div>
        <div class="cell c290">Default</div>
        <div class="cell c70"></div>
        <div class="cell c68"></div>
        <div class="cell c70"></div>
        <div class="cell c66"></div>
        <div class="cell meter">
          ${ic(24, 13, svg`${[0, 3, 6, 9, 12, 15, 18, 21].map((x, i) => svg`<rect x=${x} y=${i > 4 ? 1 : 2} width="2" height="5" fill="#6a8a10" /><rect x=${x} y="7" width="2" height="6" fill="#104060" />`)}`)}
          <span>4946/2 kb</span>
        </div>
      </div>
      ${this.taskbar()}
    `
  }
}
